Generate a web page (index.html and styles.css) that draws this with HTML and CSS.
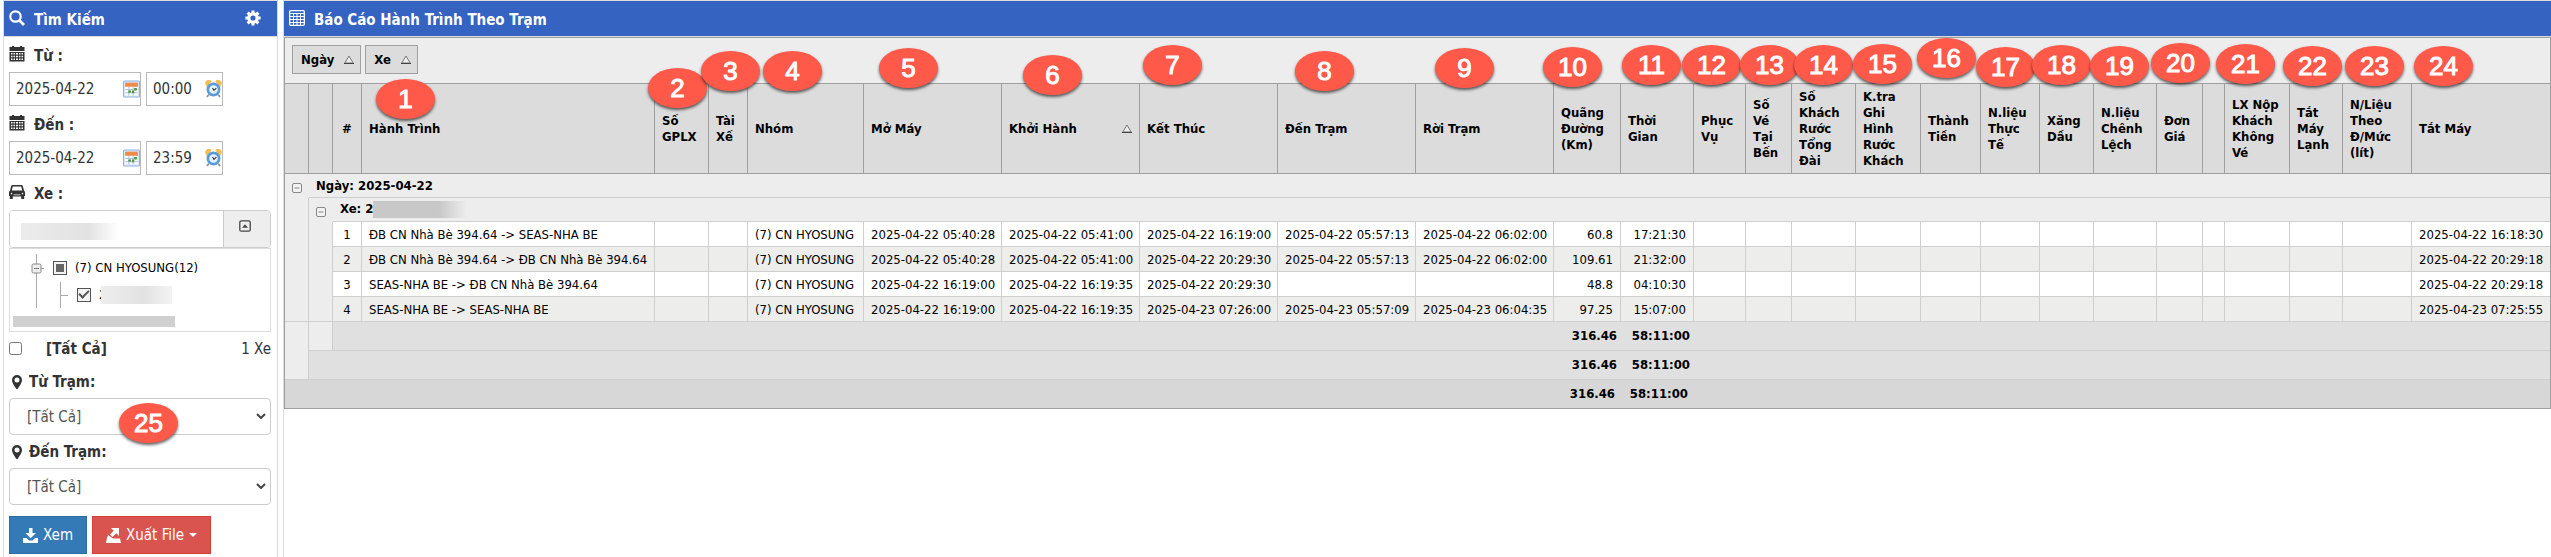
FILE: index.html
```html
<!DOCTYPE html>
<html lang="vi">
<head>
  <meta charset="UTF-8" />
  <meta name="viewport" content="width=device-width, initial-scale=1.0"/>
  <title>Báo Cáo Hành Trình Theo Trạm</title>
  <link rel="stylesheet" href="styles.css">
</head>
<body>

  <svg class="sprite" aria-hidden="true">
    <symbol id="i-calendar" viewBox="0 0 16 16">
      <path fill="currentColor" fill-rule="evenodd" d="M3 0h2v1h6V0h2v1h2.500v4H.5V1H3zM.5 6h15v9.500H.5zM2 7v1.500h1.500V7zM4.500 7v1.500H6V7zM7 7v1.500h2V7zM10 7v1.500h1.500V7zM12.500 7v1.500H14V7zM2 9.800v1.500h1.500V9.800zM4.500 9.800v1.500H6V9.800zM7 9.800v1.500h2V9.800zM10 9.800v1.500h1.500V9.800zM12.500 9.800v1.500H14V9.800zM2 12.500V14h1.500v-1.500zM4.500 12.500V14H6v-1.500zM7 12.500V14h2v-1.500zM10 12.500V14h1.500v-1.500zM12.500 12.500V14H14v-1.500z"/>
    </symbol>
    <symbol id="i-pick" viewBox="0 0 16 16">
      <rect x=".5" y=".5" width="15" height="15" rx="1" fill="#dcebfa" stroke="#8fb2de"/>
      <path fill="#f08a4b" d="M2 2h12v4H2z"/>
      <path fill="#fff" d="M2 6h12v8H2z"/>
      <path stroke="#a9c4e4" fill="none" d="M2 8.500h12M2 11.500h12M5.500 6v8M9.500 6v8"/>
      <path fill="#4c9a3c" d="M10.500 7h2.500v2.500h-2.500zM5 9.500h2.500v2H5zM8.500 9.500h2v2.500h-2z"/>
    </symbol>
    <symbol id="i-clock" viewBox="0 0 18 18">
      <path fill="#f3bd4e" d="M1 5a3.500 3.500 0 0 1 6-4L2 7zM17 5a3.500 3.500 0 0 0-6-4l5 6z"/>
      <path stroke="#999" stroke-width="2" d="M4 15l-2 2.500M14 15l2 2.500"/>
      <circle cx="9" cy="9.500" r="6" fill="#e6f2fb" stroke="#5b9bd9" stroke-width="2.800"/>
      <path stroke="#333" stroke-width="1.200" fill="none" d="M8 8l1.500 2.500L12 8"/>
    </symbol>
    <symbol id="i-pin" viewBox="0 0 10 16">
      <path fill="currentColor" fill-rule="evenodd" d="M5 1a5 5 0 0 1 5 5c0 3-3 6.500-4 8.500q-1 1.500-2 0C3 12.500 0 9 0 6a5 5 0 0 1 5-5zm0 2.500a2.500 2.500 0 1 0 0 5 2.500 2.500 0 0 0 0-5z"/>
    </symbol>
    <symbol id="i-sort" viewBox="0 0 10 9">
      <path fill="#eee" stroke="#777" d="M5 1L9.200 8H.8z"/>
      <path stroke="#444" d="M0 8.500h10"/>
    </symbol>
    <symbol id="i-minus" viewBox="0 0 10 10">
      <rect x=".5" y=".5" width="9" height="9" rx="1.500" fill="#f2f2f2" stroke="#888"/>
      <path stroke="#888" d="M2.500 5h5"/>
    </symbol>
  </svg>

  <div class="page">
    <aside class="panel sidebar">
      <header class="panel-head">
        <svg class="icon" viewBox="0 0 16 16"><circle cx="6.500" cy="6.500" r="5.200" fill="none" stroke="#fff" stroke-width="2.200"/><path stroke="#fff" stroke-width="2.800" d="M10.300 10.300l4.700 4.700"/></svg>
        <h1>Tìm Kiếm</h1>
        <button class="gear" type="button" aria-label="Cài đặt">
          <svg class="icon" viewBox="0 0 16 16"><circle cx="8" cy="8" r="4.200" fill="none" stroke="#fff" stroke-width="3.200"/><path stroke="#fff" stroke-width="3" d="M8 .4v3M8 12.600v3M.4 8h3M12.600 8h3M2.600 2.600l2 2M11.400 11.400l2 2M2.600 13.400l2-2M11.400 4.600l2-2"/></svg>
        </button>
      </header>

      <form class="filters">
        <label class="field-label" for="fromDate"><svg class="icon"><use href="#i-calendar"/></svg>Từ :</label>
        <div class="field-row">
          <div class="picker picker-date"><input type="text" id="fromDate" value="2025-04-22"><svg class="picker-icon"><use href="#i-pick"/></svg></div>
          <div class="picker picker-time"><input type="text" aria-label="Từ giờ" value="00:00"><svg class="picker-icon"><use href="#i-clock"/></svg></div>
        </div>

        <label class="field-label" for="toDate"><svg class="icon"><use href="#i-calendar"/></svg>Đến :</label>
        <div class="field-row">
          <div class="picker picker-date"><input type="text" id="toDate" value="2025-04-22"><svg class="picker-icon"><use href="#i-pick"/></svg></div>
          <div class="picker picker-time"><input type="text" aria-label="Đến giờ" value="23:59"><svg class="picker-icon"><use href="#i-clock"/></svg></div>
        </div>

        <label class="field-label" for="vehicle">
          <svg class="icon" viewBox="0 0 16 16"><path fill="currentColor" fill-rule="evenodd" d="M3.500 1h9q1 0 1.300 1L15 6.500l1 1.500v4h-.8v3h-3v-2.500H3.800V15h-3v-3H0V8l1-1.500L2.200 2q.3-1 1.300-1zM3.800 2.500l-1 4h10.400l-1-4zM2.500 8.800a.8.8 0 1 0 0 1.600.8.800 0 0 0 0-1.600zM13.500 8.800a.8.8 0 1 0 0 1.600.8.800 0 0 0 0-1.600zM4.500 10.500v.7h7v-.7z"/></svg>Xe :
        </label>
        <div class="input-group">
          <input type="text" id="vehicle">
          <button type="button" aria-label="Thu gọn">
            <svg viewBox="0 0 12 12"><rect x=".8" y=".8" width="10.400" height="10.400" rx="1.500" fill="none" stroke="#444" stroke-width="1.300"/><path fill="#444" d="M3 7.800l3-3.500 3 3.500z"/></svg>
          </button>
          <span class="mask mask-input"></span>
        </div>

        <div class="tree">
          <div class="tree-row">
            <svg class="tree-line" viewBox="0 0 24 27"><path stroke="#aaa" d="M7.500 0v27M7 14.500h8"/><rect x="3" y="10" width="9" height="9" rx="1.500" fill="#eee" stroke="#888"/><path stroke="#777" d="M5 14.500h5"/></svg>
            <label><input type="checkbox" class="tick tick-part">(7) CN HYOSUNG(12)</label>
          </div>
          <div class="tree-row">
            <svg class="tree-line" viewBox="0 0 24 27"><path stroke="#aaa" d="M7.500 0v27"/></svg>
            <svg class="tree-line" viewBox="0 0 24 27"><path stroke="#aaa" d="M7.500 1v26M7 14.500h8"/></svg>
            <label><input type="checkbox" class="tick tick-on" checked>2<span class="mask mask-tree"></span></label>
          </div>
          <div class="tree-scroll"></div>
        </div>

        <div class="all-row">
          <label><input type="checkbox" class="all-check">[Tất Cả]</label>
          <span>1 Xe</span>
        </div>

        <label class="field-label station" for="fromStation"><svg class="icon-pin"><use href="#i-pin"/></svg>Từ Trạm:</label>
        <div class="select">
          <select id="fromStation"><option>[Tất Cả]</option></select>
          <svg viewBox="0 0 10 6"><path fill="none" stroke="#444" stroke-width="2" d="M1 1l4 4 4-4"/></svg>
        </div>
        <label class="field-label station" for="toStation"><svg class="icon-pin"><use href="#i-pin"/></svg>Đến Trạm:</label>
        <div class="select">
          <select id="toStation"><option>[Tất Cả]</option></select>
          <svg viewBox="0 0 10 6"><path fill="none" stroke="#444" stroke-width="2" d="M1 1l4 4 4-4"/></svg>
        </div>

        <div class="actions">
          <button type="button" class="btn btn-view">
            <svg viewBox="0 0 15 15"><path fill="#fff" d="M6 0h3.500v5H13L7.700 10.300 2.500 5H6zM0 10h3.500l2.500 2.500h3.500L12 10h3v5H0z"/></svg>Xem
          </button>
          <button type="button" class="btn btn-export">
            <svg viewBox="0 0 15 15"><path fill="#fff" d="M5 0h8v8l-2.700-2.700L6.500 9 4 6.500l3.700-3.800zM2 7l5 3.500h7l1 4.500H0l.8-4.500z"/></svg>Xuất File<span class="caret"></span>
          </button>
        </div>
      </form>
    </aside>

    <main class="panel report">
      <header class="panel-head">
        <svg class="icon" viewBox="0 0 16 16"><rect x=".7" y=".7" width="14.600" height="14.600" rx="1" fill="none" stroke="#fff" stroke-width="1.300"/><path stroke="#fff" fill="none" d="M1 3.500h14M1 6.500h14M1 9.500h14M1 12.500h14M4.500 4v11M8 4v11M11.500 4v11"/></svg>
        <h1>Báo Cáo Hành Trình Theo Trạm</h1>
      </header>

      <div class="grid">
        <div class="group-panel">
          <button type="button">Ngày <svg class="sort"><use href="#i-sort"/></svg></button>
          <button type="button">Xe <svg class="sort"><use href="#i-sort"/></svg></button>
        </div>

        <table>
          <colgroup>
            <col class="w24"><col class="w24"><col class="w29"><col class="w293"><col class="w54"><col class="w39"><col class="w116">
            <col class="w138"><col class="w138"><col class="w138"><col class="w138"><col class="w138">
            <col class="w67"><col class="w73"><col class="w52"><col class="w46"><col class="w64"><col class="w65"><col class="w60">
            <col class="w59"><col class="w54"><col class="w63"><col class="w46"><col class="w22"><col class="w65"><col class="w53"><col class="w69"><col>
          </colgroup>
          <thead>
            <tr>
              <th></th><th></th><th class="num">#</th><th>Hành Trình</th><th>Số GPLX</th><th>Tài Xế</th><th>Nhóm</th>
              <th>Mở Máy</th><th><div class="sorted">Khởi Hành <svg class="sort"><use href="#i-sort"/></svg></div></th><th>Kết Thúc</th><th>Đến Trạm</th><th>Rời Trạm</th>
              <th>Quãng Đường (Km)</th><th>Thời Gian</th><th>Phục Vụ</th><th>Số<br>Vé<br>Tại<br>Bến</th><th>Số Khách Rước Tổng Đài</th><th>K.tra Ghi Hình Rước Khách</th><th>Thành Tiền</th>
              <th>N.liệu Thực Tế</th><th>Xăng Dầu</th><th>N.liệu Chênh Lệch</th><th>Đơn Giá</th><th></th><th>LX Nộp Khách Không Vé</th><th>Tắt Máy Lạnh</th><th>N/Liệu<br>Theo<br>Đ/Mức<br>(lít)</th><th>Tắt Máy</th>
            </tr>
          </thead>
          <tbody>
            <tr class="group">
              <td class="toggle"><svg class="minus"><use href="#i-minus"/></svg></td>
              <td class="group-title" colspan="27">Ngày: 2025-04-22</td>
            </tr>
            <tr class="group">
              <td class="indent"></td>
              <td class="toggle"><svg class="minus"><use href="#i-minus"/></svg></td>
              <td class="group-title" colspan="26">Xe: 2<span class="mask mask-group"></span></td>
            </tr>
            <tr class="data">
              <td class="indent"></td><td class="indent"></td><td class="num">1</td><td>ĐB CN Nhà Bè 394.64 -&gt; SEAS-NHA BE</td><td></td><td></td><td>(7) CN HYOSUNG</td>
              <td>2025-04-22 05:40:28</td><td>2025-04-22 05:41:00</td><td>2025-04-22 16:19:00</td><td>2025-04-22 05:57:13</td><td>2025-04-22 06:02:00</td>
              <td class="right">60.8</td><td class="right">17:21:30</td><td></td><td></td><td></td><td></td><td></td><td></td><td></td><td></td><td></td><td></td><td></td><td></td><td></td><td>2025-04-22 16:18:30</td>
            </tr>
            <tr class="data alt">
              <td class="indent"></td><td class="indent"></td><td class="num">2</td><td>ĐB CN Nhà Bè 394.64 -&gt; ĐB CN Nhà Bè 394.64</td><td></td><td></td><td>(7) CN HYOSUNG</td>
              <td>2025-04-22 05:40:28</td><td>2025-04-22 05:41:00</td><td>2025-04-22 20:29:30</td><td>2025-04-22 05:57:13</td><td>2025-04-22 06:02:00</td>
              <td class="right">109.61</td><td class="right">21:32:00</td><td></td><td></td><td></td><td></td><td></td><td></td><td></td><td></td><td></td><td></td><td></td><td></td><td></td><td>2025-04-22 20:29:18</td>
            </tr>
            <tr class="data">
              <td class="indent"></td><td class="indent"></td><td class="num">3</td><td>SEAS-NHA BE -&gt; ĐB CN Nhà Bè 394.64</td><td></td><td></td><td>(7) CN HYOSUNG</td>
              <td>2025-04-22 16:19:00</td><td>2025-04-22 16:19:35</td><td>2025-04-22 20:29:30</td><td></td><td></td>
              <td class="right">48.8</td><td class="right">04:10:30</td><td></td><td></td><td></td><td></td><td></td><td></td><td></td><td></td><td></td><td></td><td></td><td></td><td></td><td>2025-04-22 20:29:18</td>
            </tr>
            <tr class="data alt last">
              <td class="indent"></td><td class="indent"></td><td class="num">4</td><td>SEAS-NHA BE -&gt; SEAS-NHA BE</td><td></td><td></td><td>(7) CN HYOSUNG</td>
              <td>2025-04-22 16:19:00</td><td>2025-04-22 16:19:35</td><td>2025-04-23 07:26:00</td><td>2025-04-23 05:57:09</td><td>2025-04-23 06:04:35</td>
              <td class="right">97.25</td><td class="right">15:07:00</td><td></td><td></td><td></td><td></td><td></td><td></td><td></td><td></td><td></td><td></td><td></td><td></td><td></td><td>2025-04-23 07:25:55</td>
            </tr>
          </tbody>
          <tfoot>
            <tr>
              <td class="indent"></td><td class="indent end"></td><td colspan="10"></td><td>316.46</td><td>58:11:00</td><td colspan="14"></td>
            </tr>
            <tr>
              <td class="indent end"></td><td colspan="11"></td><td>316.46</td><td>58:11:00</td><td colspan="14"></td>
            </tr>
            <tr class="total">
              <td colspan="12"></td><td>316.46</td><td>58:11:00</td><td colspan="14"></td>
            </tr>
          </tfoot>
        </table>
      </div>
    </main>

    <!-- numbered callouts -->
    <div class="pins">
      <span class="pin p1">1</span>
      <span class="pin p2">2</span>
      <span class="pin p3">3</span>
      <span class="pin p4">4</span>
      <span class="pin p5">5</span>
      <span class="pin p6">6</span>
      <span class="pin p7">7</span>
      <span class="pin p8">8</span>
      <span class="pin p9">9</span>
      <span class="pin p10">10</span>
      <span class="pin p11">11</span>
      <span class="pin p12">12</span>
      <span class="pin p13">13</span>
      <span class="pin p14">14</span>
      <span class="pin p15">15</span>
      <span class="pin p16">16</span>
      <span class="pin p17">17</span>
      <span class="pin p18">18</span>
      <span class="pin p19">19</span>
      <span class="pin p20">20</span>
      <span class="pin p21">21</span>
      <span class="pin p22">22</span>
      <span class="pin p23">23</span>
      <span class="pin p24">24</span>
      <span class="pin p25">25</span>
    </div>
  </div>

</body>
</html>
```
FILE: styles.css
```css
* {
  box-sizing: border-box;
}

body {
  margin: 0;
  background: #fff;
  color: #333;
  font-family: Tahoma, "DejaVu Sans Condensed", "DejaVu Sans", sans-serif;
  font-size: 15px;
}

input, select, button {
  font-family: inherit;
  font-size: inherit;
  color: inherit;
  margin: 0;
}

.sprite {
  display: none;
}

.icon {
  width: 16px;
  height: 16px;
  flex: none;
}

.page {
  position: relative;
  display: flex;
  gap: 5px;
  min-height: 100vh;
  padding-left: 3px;
}

.panel {
  border: 1px solid #dcdcdc;
  border-bottom: 0;
}

.panel-head {
  display: flex;
  align-items: center;
  gap: 9px;
  height: 36px;
  padding: 0 16px 2px 5px;
  background: #3463c1;
  border-bottom: 1px solid #dcdcdc;
  color: #fff;
}

.panel-head h1 {
  margin: 0;
  padding-top: 4px;
  font-size: 15px;
  line-height: 20px;
}

/* search panel */
.sidebar {
  flex: none;
  width: 275px;
}

.gear {
  display: flex;
  margin-left: auto;
  padding: 0;
  border: 0;
  background: none;
}

.filters {
  padding: 0 6px 0 5px;
}

.field-label {
  display: flex;
  align-items: center;
  gap: 9px;
  height: 35px;
  padding-top: 2px;
  font-weight: bold;
}

.field-label .icon {
  margin-bottom: 4px;
}

.field-label.station {
  gap: 7px;
  padding-left: 3px;
  padding-top: 0;
  height: 33px;
}

.icon-pin {
  width: 10px;
  height: 16px;
}

.field-row {
  display: flex;
  gap: 5px;
}

.picker {
  position: relative;
}

.picker input {
  display: block;
  width: 100%;
  height: 34px;
  padding: 0 6px;
  border: 1px solid #bbb;
}

.picker-date {
  width: 132px;
}

.picker-time {
  width: 77px;
}

.picker-icon {
  position: absolute;
  top: 8px;
  right: 1px;
  width: 17px;
  height: 18px;
}

.input-group {
  position: relative;
  display: flex;
  height: 38px;
  border: 1px solid #ccc;
  border-radius: 4px;
  overflow: hidden;
}

.input-group input {
  flex: 1;
  min-width: 0;
  border: 0;
}

.input-group button {
  width: 47px;
  padding: 0 4px 4px 0;
  border: 0;
  border-left: 1px solid #ccc;
  background: #eee;
}

.input-group svg {
  width: 12px;
  height: 12px;
}

.tree {
  height: 84px;
  padding: 5px 3px 0;
  border: 1px solid #ddd;
  color: #000;
  font-size: 13px;
}

.tree-row {
  display: flex;
  align-items: center;
  height: 27px;
  padding-left: 16px;
}

.tree-line {
  width: 24px;
  height: 27px;
}

.tree-row label {
  display: flex;
  align-items: center;
}

.tick {
  appearance: none;
  display: grid;
  place-items: center;
  width: 14px;
  height: 14px;
  margin-right: 8px;
  border: 1px solid #555;
  background: #f4f4f4;
}

.tick-part::before {
  content: "";
  width: 8px;
  height: 8px;
  background: #666;
}

.tick-on::before {
  content: "";
  width: 8px;
  height: 4px;
  margin-bottom: 3px;
  border-left: 2px solid #555;
  border-bottom: 2px solid #555;
  transform: rotate(-45deg);
}

.tree-scroll {
  width: 162px;
  height: 11px;
  margin-top: 8px;
  background: #d0d0d0;
}

.all-row {
  display: flex;
  align-items: center;
  justify-content: space-between;
  height: 33px;
}

.all-row label {
  display: flex;
  align-items: center;
  gap: 24px;
  font-weight: bold;
}

.all-check {
  width: 13px;
  height: 13px;
}

.select {
  position: relative;
}

.select select {
  display: block;
  appearance: none;
  width: 100%;
  height: 37px;
  padding: 0 17px;
  border: 1px solid #ccc;
  border-radius: 4px;
  background: #fff;
  color: #555;
}

.select svg {
  position: absolute;
  top: 15px;
  right: 5px;
  width: 10px;
  height: 6px;
}

.actions {
  display: flex;
  gap: 5px;
  padding-top: 11px;
}

.btn {
  display: flex;
  align-items: center;
  gap: 5px;
  height: 38px;
  padding: 0 13px;
  border: 1px solid;
  color: #fff;
}

.btn svg {
  width: 15px;
  height: 15px;
}

.btn-view {
  background: #337ab7;
  border-color: #2e6da4;
}

.btn-export {
  background: #d9534f;
  border-color: #d43f3a;
}

.caret {
  border: 4px solid transparent;
  border-top-color: #fff;
  border-bottom: 0;
}

/* smudged plate numbers */
.mask {
  background: linear-gradient(90deg, #c8c8c8 70%, #ededed);
}

.mask-input {
  position: absolute;
  left: 11px;
  top: 12px;
  width: 96px;
  height: 17px;
  background: linear-gradient(90deg, #ececec, #e2e2e2 70%, #fdfdfd);
}

.mask-tree {
  width: 71px;
  height: 18px;
  margin-left: -5px;
  background: linear-gradient(90deg, #ededed, #e2e2e2 60%, #f3f3f3);
}

.mask-group {
  display: inline-block;
  width: 94px;
  height: 17px;
  margin-left: -1px;
  vertical-align: middle;
}

/* report */
.report {
  flex: 1;
  min-width: 0;
  border-right: 0;
}

.grid {
  border: 1px solid #9f9f9f;
  background: #ededed;
  color: #000;
  font-size: 13px;
}

.group-panel {
  display: flex;
  gap: 4px;
  padding: 7px 7px 9px;
}

.group-panel button {
  display: flex;
  align-items: center;
  gap: 10px;
  height: 29px;
  padding: 0 6px 0 8px;
  border: 1px solid #9f9f9f;
  background: #dcdcdc;
  font-weight: bold;
}

.sort {
  flex: none;
  width: 10px;
  height: 9px;
}

table {
  width: 100%;
  table-layout: fixed;
  border-collapse: separate;
  border-spacing: 0;
}

.w22 { width: 22px; }
.w24 { width: 24px; }
.w29 { width: 29px; }
.w39 { width: 39px; }
.w46 { width: 46px; }
.w52 { width: 52px; }
.w53 { width: 53px; }
.w54 { width: 54px; }
.w59 { width: 59px; }
.w60 { width: 60px; }
.w63 { width: 63px; }
.w64 { width: 64px; }
.w65 { width: 65px; }
.w67 { width: 67px; }
.w69 { width: 69px; }
.w73 { width: 73px; }
.w116 { width: 116px; }
.w138 { width: 138px; }
.w293 { width: 293px; }

th {
  height: 91px;
  padding: 0 4px 0 7px;
  border: 1px solid #9f9f9f;
  border-left: 0;
  background: #dcdcdc;
  line-height: 16px;
  text-align: left;
}

th:last-child,
.data td:last-child {
  border-right: 0;
}

.sorted {
  display: flex;
  align-items: center;
  justify-content: space-between;
  padding-right: 3px;
}

td {
  padding: 0 0 0 7px;
  white-space: nowrap;
  line-height: 16px;
}

th.num,
td.num {
  padding-left: 0;
  padding-right: 0;
  text-align: center;
}

.group td {
  height: 24px;
}

.group-title {
  font-weight: bold;
  border-bottom: 1px solid #cfcfcf;
}

.toggle .minus {
  display: block;
  width: 10px;
  height: 10px;
  margin-top: 3px;
}

.data td {
  height: 25px;
  padding-top: 1px;
  background: #fff;
  border-right: 1px solid #cfcfcf;
  border-bottom: 1px solid #cfcfcf;
}

.data.alt td {
  background: #ededeb;
}

.data td.right {
  padding-left: 0;
  padding-right: 7px;
  text-align: right;
}

.group .indent,
.data .indent,
.data.alt .indent,
tfoot .indent {
  background: #ededed;
  border-right: 1px solid #cfcfcf;
  border-bottom: 0;
}

.data.last .indent,
tfoot .indent.end {
  border-bottom: 1px solid #cfcfcf;
}

tfoot td {
  height: 29px;
  padding: 0 4px 0 0;
  background: #e0e0e0;
  border-bottom: 1px solid #cfcfcf;
  font-weight: bold;
  text-align: right;
}

.total td {
  height: 28px;
  padding-right: 6px;
  background: #d7d7d7;
  border-bottom: 0;
}

/* callouts */
.pins {
  position: absolute;
  left: 0;
  top: 0;
}

.pin {
  position: absolute;
  width: 59px;
  height: 40px;
  border-radius: 50%;
  background: #ff594a;
  box-shadow: 0 2px 3px rgba(0, 0, 0, 0.6);
  color: #fff;
  font-family: "Liberation Sans", Arial, sans-serif;
  font-size: 26px;
  line-height: 41px;
  text-align: center;
  -webkit-text-stroke: 1px #fff;
}

.p1 { left: 376px; top: 79px; }
.p2 { left: 648px; top: 68px; }
.p3 { left: 701px; top: 51px; }
.p4 { left: 763px; top: 51px; }
.p5 { left: 879px; top: 48px; }
.p6 { left: 1023px; top: 55px; }
.p7 { left: 1143px; top: 45px; }
.p8 { left: 1295px; top: 51px; }
.p9 { left: 1435px; top: 48px; }
.p10 { left: 1543px; top: 47px; }
.p11 { left: 1622px; top: 45px; }
.p12 { left: 1682px; top: 45px; }
.p13 { left: 1740px; top: 45px; }
.p14 { left: 1794px; top: 45px; }
.p15 { left: 1853px; top: 44px; }
.p16 { left: 1917px; top: 38px; }
.p17 { left: 1976px; top: 47px; }
.p18 { left: 2032px; top: 45px; }
.p19 { left: 2090px; top: 46px; }
.p20 { left: 2151px; top: 43px; }
.p21 { left: 2216px; top: 44px; }
.p22 { left: 2283px; top: 46px; }
.p23 { left: 2345px; top: 46px; }
.p24 { left: 2414px; top: 46px; }
.p25 { left: 119px; top: 403px; }
```
